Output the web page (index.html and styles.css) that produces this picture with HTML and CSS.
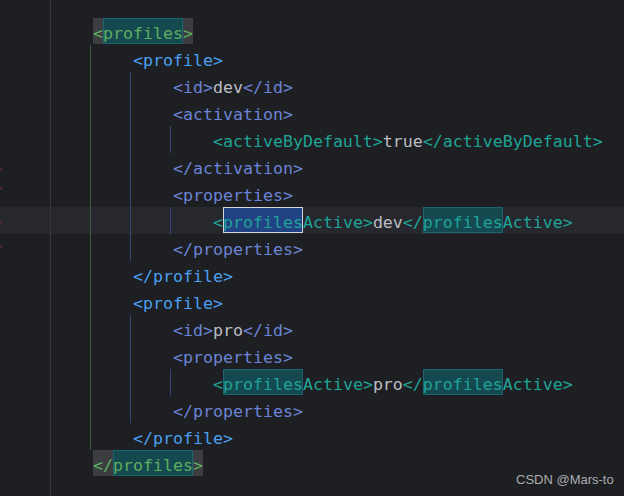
FILE: index.html
```html
<!DOCTYPE html>
<html>
<head>
<meta charset="utf-8">
<link rel="stylesheet" href="styles.css">
</head>
<body>
<div class="editor">
  <div class="guide g-gut"></div>
  <div class="guide g-green"></div>
  <div class="guide g-blue g-b1"></div>
  <div class="guide g-blue g-b2"></div>
  <div class="guide g-ind g-i1"></div>
  <div class="guide g-ind g-i2"></div>
  <div class="guide g-ind g-i3"></div>
  <div class="mark m1"></div>
  <div class="mark m2"></div>
  <div class="mark m3"></div>
  <div class="mark m4"></div>

  <div class="line l2"><span class="tg-g br">&lt;</span><span class="tg-g mt">profiles</span><span class="tg-g br">&gt;</span></div>
  <div class="line l3"><span class="tg-b">&lt;profile&gt;</span></div>
  <div class="line l4"><span class="tg-p">&lt;id&gt;</span><span class="txt">dev</span><span class="tg-p">&lt;/id&gt;</span></div>
  <div class="line l4"><span class="tg-p">&lt;activation&gt;</span></div>
  <div class="line l5"><span class="tg-t">&lt;activeByDefault&gt;</span><span class="txt">true</span><span class="tg-t">&lt;/activeByDefault&gt;</span></div>
  <div class="line l4"><span class="tg-p">&lt;/activation&gt;</span></div>
  <div class="line l4"><span class="tg-p">&lt;properties&gt;</span></div>
  <div class="line l5 cur"><span class="tg-t">&lt;</span><span class="tg-t sel">profiles</span><span class="tg-t">Active&gt;</span><span class="txt">dev</span><span class="tg-t">&lt;/</span><span class="tg-t mt">profiles</span><span class="tg-t">Active&gt;</span></div>
  <div class="line l4"><span class="tg-p">&lt;/properties&gt;</span></div>
  <div class="line l3"><span class="tg-b">&lt;/profile&gt;</span></div>
  <div class="line l3"><span class="tg-b">&lt;profile&gt;</span></div>
  <div class="line l4"><span class="tg-p">&lt;id&gt;</span><span class="txt">pro</span><span class="tg-p">&lt;/id&gt;</span></div>
  <div class="line l4"><span class="tg-p">&lt;properties&gt;</span></div>
  <div class="line l5"><span class="tg-t">&lt;</span><span class="tg-t mt">profiles</span><span class="tg-t">Active&gt;</span><span class="txt">pro</span><span class="tg-t">&lt;/</span><span class="tg-t mt">profiles</span><span class="tg-t">Active&gt;</span></div>
  <div class="line l4"><span class="tg-p">&lt;/properties&gt;</span></div>
  <div class="line l3"><span class="tg-b">&lt;/profile&gt;</span></div>
  <div class="line l2"><span class="tg-g br">&lt;/</span><span class="tg-g mt">profiles</span><span class="tg-g br">&gt;</span></div>

  <div class="wm">CSDN @Mars-to</div>
</div>
</body>
</html>
```
FILE: styles.css
```css
html, body {
  margin: 0;
  padding: 0;
  background: #1e1f22;
}
.editor {
  position: relative;
  width: 624px;
  height: 496px;
  overflow: hidden;
  background: #1e1f22;
  padding-top: 18px;
  box-sizing: border-box;
  font-family: "DejaVu Sans Mono", "Liberation Mono", monospace;
  font-size: 16.6px;
}
.line {
  display: flex;
  align-items: flex-start;
  height: 27px;
  white-space: pre;
}
.line span {
  line-height: 31px;
  height: 26px;
}
.l2 { padding-left: 93px; }
.l3 { padding-left: 133px; }
.l4 { padding-left: 173px; }
.l5 { padding-left: 213px; }
.cur { background: #26282e; }

.tg-g { color: #5fad5f; }
.tg-b { color: #4a9ff0; }
.tg-p { color: #6b83d6; }
.tg-t { color: #1fa397; }
.txt { color: #bcbec4; }

.br { background: #3b3d41; }
.mt {
  background: #144950;
  box-shadow: inset 0 0 0 1px #1b6470;
}
.sel {
  background: #214283;
  box-shadow: inset 0 0 0 1px #d4d7dd;
}

.guide {
  position: absolute;
  width: 1px;
}
.g-gut { left: 50px; top: 0; height: 496px; background: #35373b; }
.g-green { left: 90px; top: 45px; height: 405px; background: #3a5a3c; }
.g-blue { left: 130px; background: #2b4a6e; }
.g-b1 { top: 72px; height: 189px; }
.g-b2 { top: 315px; height: 108px; }
.g-ind { left: 170px; height: 27px; background: #37437a; }
.g-i1 { top: 126px; }
.g-i2 { top: 207px; }
.g-i3 { top: 369px; }

.mark {
  position: absolute;
  left: 0;
  width: 2px;
  height: 3px;
  background: #4a2a2e;
}
.m1 { top: 168px; }
.m2 { top: 187px; }
.m3 { top: 221px; }
.m4 { top: 245px; }

.wm {
  position: absolute;
  left: 516px;
  top: 472px;
  font-family: "Liberation Sans", Arial, sans-serif;
  font-size: 13px;
  color: #a9abb0;
}
```
